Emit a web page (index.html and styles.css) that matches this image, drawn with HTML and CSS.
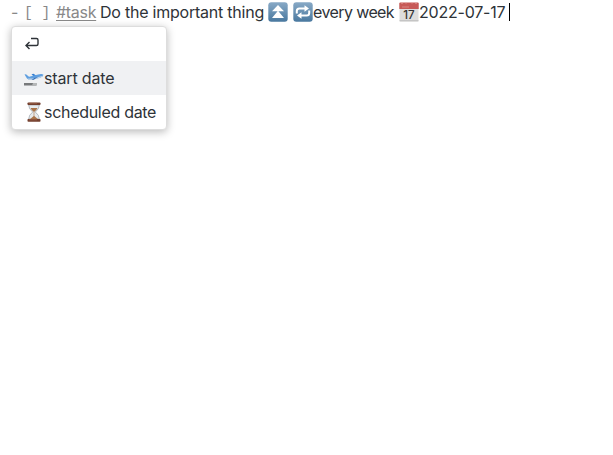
FILE: index.html
```html
<!DOCTYPE html>
<html lang="en">
<head>
<meta charset="utf-8">
<title>Task editor</title>
<link rel="stylesheet" href="styles.css">
</head>
<body>
<main class="editor">
  <div class="line">
    <span class="muted dash">-</span>
    <span class="muted box">[ ]</span>
    <span class="tag">#task</span>
    <span class="desc">Do the important thing</span>
    <svg class="emoji priority" viewBox="0 0 20 20">
      <defs><linearGradient id="blue" x2="0" y2="1"><stop stop-color="#88a9c6"/><stop offset="1" stop-color="#49789f"/></linearGradient></defs>
      <rect x=".3" y=".3" width="19.4" height="19.4" rx="3" fill="url(#blue)"/>
      <path d="M10 3l6 6.300H4zM10 8.700l6 7.300H4z" fill="#fff"/>
    </svg>
    <svg class="emoji repeat" viewBox="0 0 20 20">
      <rect x=".3" y=".3" width="19.4" height="19.4" rx="3" fill="url(#blue)"/>
      <path d="M3.800 11.500V9q0-2.500 2.500-2.500H12M16.200 8.500V11q0 2.500-2.500 2.500H8" fill="none" stroke="#fff" stroke-width="2"/>
      <path d="M11.500 3.300l4.500 3.200-4.500 3.200zM8.500 10.300L4 13.500l4.500 3.200z" fill="#fff"/>
    </svg>
    <span class="recur">every week</span>
    <svg class="emoji" viewBox="0 0 20 20">
      <path d="M.5 2h19v16.500q0 1-1 1h-17q-1 0-1-1z" fill="#dedddc"/>
      <path d="M.3 1.500q0-1 1-1h17.400q1 0 1 1V7H.3z" fill="#c75a57"/>
      <path d="M3 0v2M7 0v1.500M13 0v1.500M17 0v2" stroke="#e6a6a3"/>
      <path d="M3 5h7" stroke="#d98582"/>
      <path d="M.5 18.800h19" stroke="#bbb"/>
      <text class="day" x="10" y="17.300">17</text>
    </svg>
    <span class="date">2022-07-17</span>
    <i class="caret"></i>
  </div>
  <div class="menu">
    <div class="item">
      <svg class="return" viewBox="0 0 16 16"><path d="M7 2.500h5.500q1.500 0 1.500 1.500v4q0 1.500-1.500 1.500H2M5.500 6L2 9.500 5.500 13"/></svg>
    </div>
    <div class="item selected">
      <svg class="emoji" viewBox="0 0 20 20">
        <path d="M0 15h12.500v2.500H0z" fill="#77797b"/><path d="M9 15h3.500v2.500H8z" fill="#b5b7b8"/>
        <path d="M7.500 6.200l2-.4 4 2.600-3 .8z" fill="#357ed1"/>
        <path d="M.5 6.500l1.500-.3L5 8.700l9-2.200q4-1 5.500.2-.2 2-3.500 3L8 11.700q-3.500.5-5-1.200z" fill="#5f9fe0"/>
        <path d="M3.500 10.400q6 .8 15.700-3-1.200 1.900-3.700 2.600L8 12q-3 .4-4.500-1.600z" fill="#bfd4e8"/>
        <path d="M11 9.800l3-.7-4.500 2.600-2 .1z" fill="#2864b2"/>
      </svg>
      <span class="label start">start date</span>
    </div>
    <div class="item">
      <svg class="emoji" viewBox="0 0 20 20">
        <path d="M4.700 3h10.600q0 4-4 7 4 3 4 7H4.700q0-4 4-7-4-3-4-7z" fill="#e7eaec" stroke="#a6acb2" stroke-width=".8"/>
        <path d="M6.500 6h7q-1 2.500-3.500 4-2.500-1.500-3.500-4zM9.700 9h.6v5l3.500 3H6.200l3.500-3z" fill="#a9744a"/>
        <rect x="3.500" y=".4" width="13" height="2.700" rx=".8" fill="#74402f"/>
        <rect x="3.500" y="17" width="13" height="2.700" rx=".8" fill="#74402f"/>
        <path d="M5 1.200h8M5 17.800h8" stroke="#a76d50" stroke-width=".7"/>
      </svg>
      <span class="label scheduled">scheduled date</span>
    </div>
  </div>
</main>
</body>
</html>
```
FILE: styles.css
```css
body {
  margin: 0;
  background: #fff;
  color: #2e3338;
  font: 16px/24px Inter, "Liberation Sans", sans-serif;
}
.editor { box-sizing: border-box; min-height: 100vh; padding: 0 0 0 11px; }
.line { display: flex; align-items: center; height: 24px; white-space: pre; }
.line > * { flex: none; }
.muted, .tag { color: #888; }
.dash { width: 13px; }
.box {
  width: 32px;
  padding-top: 3px;
  font: 14.5px/21px "Liberation Mono", monospace;
}
.tag { width: 44px; text-decoration: underline; text-underline-offset: 2px; text-decoration-thickness: 1px; letter-spacing: -.3px; }
.desc { width: 168px; letter-spacing: -.23px; }
.emoji { display: block; flex: none; width: 20px; height: 20px; }
.priority { margin-right: 5px; }
.recur { width: 86px; letter-spacing: -.6px; }
.date { width: 90px; letter-spacing: -.22px; }
.caret { width: 1px; height: 18px; background: #000; }
.day { font: 500 11.5px Inter, sans-serif; text-anchor: middle; fill: #333; }
.menu {
  box-sizing: border-box;
  width: 156px;
  margin-top: 2px;
  border: 1px solid #ddd;
  border-radius: 4px;
  background: #fff;
  box-shadow: 0 2px 8px rgba(0, 0, 0, .28);
  overflow: hidden;
}
.item { display: flex; align-items: center; height: 34px; padding-left: 12px; white-space: nowrap; }
.selected { background: #f0f1f3; }
.return { width: 16px; height: 16px; fill: none; stroke: #2e3338; stroke-width: 1.4; }
.label { letter-spacing: -.3px; }
.start { letter-spacing: -.15px; }
```
